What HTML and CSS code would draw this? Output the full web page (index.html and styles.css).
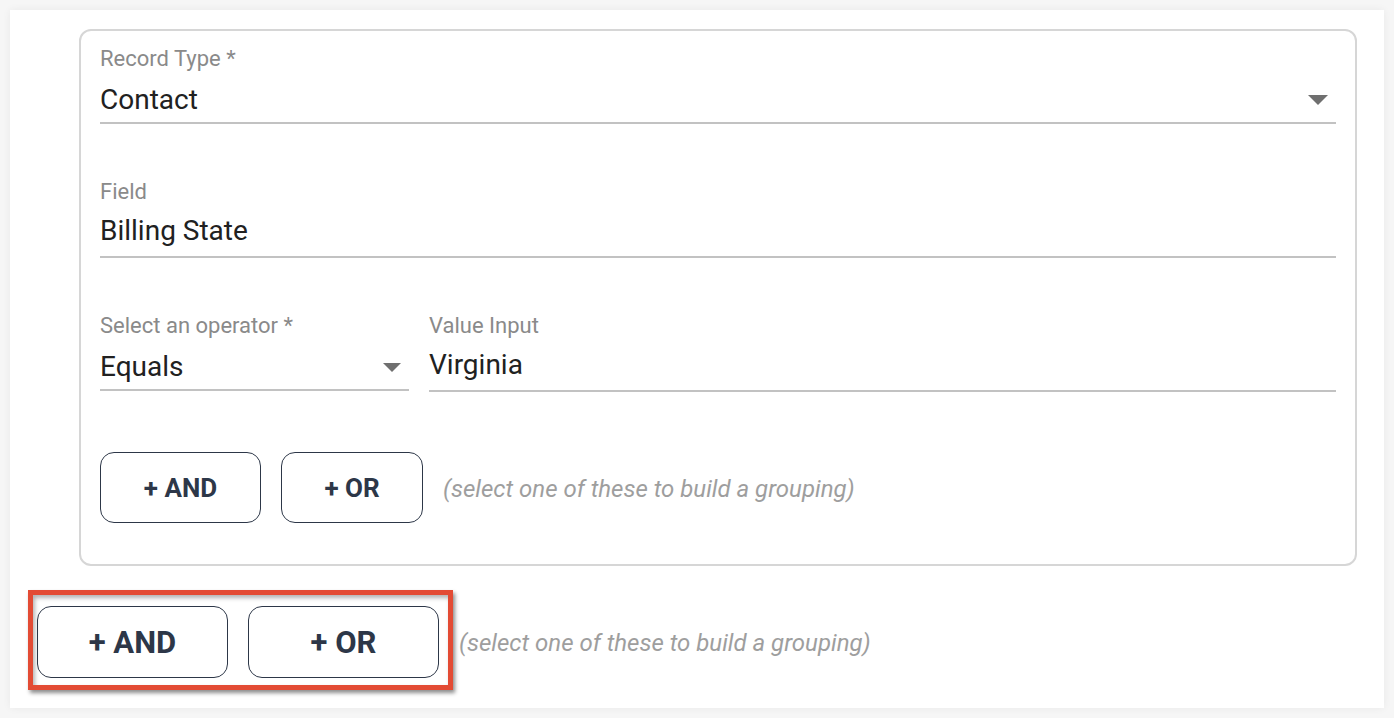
FILE: index.html
```html
<!DOCTYPE html>
<html lang="en">
<head>
  <meta charset="UTF-8">
  <meta name="viewport" content="width=device-width, initial-scale=1.0">
  <title>Filter Builder</title>
  <link rel="stylesheet" href="styles.css">
</head>
<body>
  <div class="page">
    <div class="group-card">
      <div class="field">
        <label>Record Type *</label>
        <div class="value select">
          <span>Contact</span>
          <span class="caret"></span>
        </div>
      </div>

      <div class="field">
        <label>Field</label>
        <div class="value field-value">Billing State</div>
      </div>

      <div class="field-row">
        <div class="field operator">
          <label>Select an operator *</label>
          <div class="value select">
            <span>Equals</span>
            <span class="caret small"></span>
          </div>
        </div>
        <div class="field value-input">
          <label>Value Input</label>
          <div class="value input-text">Virginia</div>
        </div>
      </div>

      <div class="button-row">
        <button type="button" class="btn-logic btn-and">+ AND</button>
        <button type="button" class="btn-logic btn-or">+ OR</button>
        <span class="hint">(select one of these to build a grouping)</span>
      </div>
    </div>

    <div class="button-row outer-row">
      <div class="highlight">
        <button type="button" class="btn-logic btn-big">+ AND</button>
        <button type="button" class="btn-logic btn-big">+ OR</button>
      </div>
      <span class="hint">(select one of these to build a grouping)</span>
    </div>
  </div>
</body>
</html>
```

FILE: styles.css
```css
body {
  font-family: 'Roboto', 'Liberation Sans', sans-serif;
  background-color: #f6f6f6;
  margin: 0;
  padding: 10px;
}

.page {
  height: 698px;
  background: white;
  box-shadow: 0 0 8px rgba(0, 0, 0, 0.06);
  padding: 19px 27px 0 27px;
  box-sizing: border-box;
}

.group-card {
  margin-left: 42px;
  border: 2px solid #d6d6d6;
  border-radius: 12px;
  padding: 15px 19px 41px 19px;
}

.field {
  margin-bottom: 55px;
}

label {
  display: block;
  font-size: 22px;
  line-height: 26px;
  color: #8a8a8a;
  margin-bottom: 9px;
}

.value {
  font-size: 28px;
  line-height: 34px;
  color: #212121;
  padding-bottom: 8px;
  border-bottom: 2px solid #c2c2c2;
}

.field:first-child .value {
  padding-bottom: 5px;
}

.field:first-child label {
  margin-bottom: 11px;
}

.select {
  display: flex;
  justify-content: space-between;
  align-items: center;
}

.caret {
  width: 0;
  height: 0;
  border-left: 10px solid transparent;
  border-right: 10px solid transparent;
  border-top: 10px solid #6f6f6f;
  margin-right: 8px;
}

.caret.small {
  border-left-width: 9px;
  border-right-width: 9px;
  border-top-width: 9px;
}

.field-row {
  display: flex;
  gap: 20px;
}

.field-row .field {
  margin-bottom: 0;
}

.operator {
  width: 309px;
}

.value-input {
  flex: 1;
}

.input-text {
  line-height: 32px;
  padding-top: 1px;
  padding-bottom: 9px;
}

.button-row {
  display: flex;
  align-items: center;
  gap: 20px;
  margin-top: 60px;
}

.btn-logic {
  font-family: 'Roboto', 'Liberation Sans', sans-serif;
  font-weight: bold;
  font-size: 26px;
  color: #2d3748;
  background: white;
  border: 1px solid #2d3748;
  border-radius: 14px;
  height: 71px;
  cursor: pointer;
}

.btn-and {
  width: 161px;
}

.btn-or {
  width: 142px;
}

.hint {
  font-size: 24px;
  font-style: italic;
  color: #9e9e9e;
  padding-top: 2px;
}

.outer-row {
  margin-top: 40px;
}

.highlight {
  display: flex;
  gap: 20px;
  position: relative;
}

.highlight::after {
  content: '';
  position: absolute;
  top: -16px;
  left: -9px;
  right: -14px;
  bottom: -12px;
  border: 5px solid #e34b34;
  box-shadow: 2px 3px 4px rgba(0, 0, 0, 0.45), inset 2px 3px 4px rgba(0, 0, 0, 0.3);
  pointer-events: none;
}

.btn-big {
  width: 191px;
  height: 72px;
  font-size: 31px;
}
```
